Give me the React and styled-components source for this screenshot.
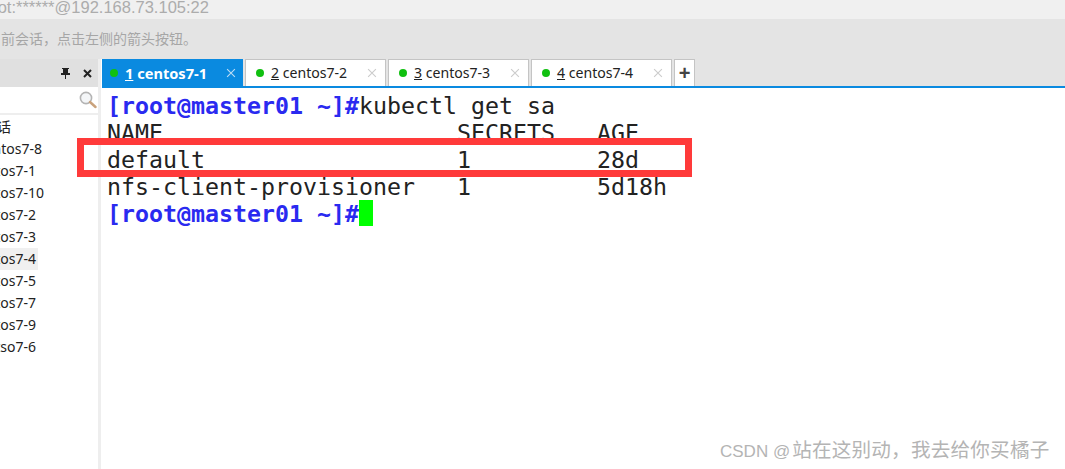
import React from "react"
import styled, { createGlobalStyle } from "styled-components"

const GlobalStyle = createGlobalStyle`
  html, body {
    margin: 0;
    padding: 0;
    background: #ffffff;
  }
  body {
    font-family: "Noto Sans", "Noto Sans CJK SC", sans-serif;
  }
`

const sessions = [
  { name: "centos7-8", shift: "-22px" },
  { name: "centos7-1" },
  { name: "centos7-10" },
  { name: "centos7-2" },
  { name: "centos7-3" },
  { name: "centos7-4", active: true },
  { name: "centos7-5" },
  { name: "centos7-7" },
  { name: "centos7-9" },
  { name: "centso7-6" },
]

const tabs = [
  { no: "1", name: "centos7-1", active: true },
  { no: "2", name: "centos7-2" },
  { no: "3", name: "centos7-3" },
  { no: "4", name: "centos7-4" },
]

const PinIcon = () => (
  <svg width="11" height="12" viewBox="0 0 11 12">
    <path d="M2 1h7v1H8v4h2v2H6v4H5V8H1V6h2V2H2z" fill="#222" />
  </svg>
)

const CloseIcon = ({ color = "#222", size = 9, width = 2 }) => (
  <svg width={size} height={size} viewBox="0 0 9 9">
    <path d="M1 1l7 7M8 1L1 8" stroke={color} strokeWidth={width} fill="none" />
  </svg>
)

const SearchIcon = () => (
  <svg width="18" height="18" viewBox="0 0 18 18">
    <circle cx="7" cy="7" r="5.6" fill="#f4f6f8" stroke="#b4b4b4" strokeWidth="1.6" />
    <path d="M11 11l5.5 5" stroke="#c9a27c" strokeWidth="2.4" strokeLinecap="round" />
  </svg>
)

export default function App() {
  return (
    <Page>
      <GlobalStyle />
      <TitleBar>
        <TitleText>root:******@192.168.73.105:22</TitleText>
      </TitleBar>
      <HintBar>
        <HintText>要恢复当前会话，点击左侧的箭头按钮。</HintText>
      </HintBar>
      <Body>
        <Sidebar>
          <SideHeader>
            <PinIcon />
            <CloseIcon />
          </SideHeader>
          <SearchRow>
            <SearchIcon />
          </SearchRow>
          <SessionList>
            <SessionRow $shift="-3px">话</SessionRow>
            {sessions.map((s) => (
              <SessionRow key={s.name} $active={s.active} $shift={s.shift}>
                {s.name}
              </SessionRow>
            ))}
          </SessionList>
        </Sidebar>
        <Divider />
        <Main>
          <TabBar>
            {tabs.map((t) => (
              <Tab key={t.no} $active={t.active}>
                <Dot />
                <TabLabel $active={t.active}>
                  <u>{t.no}</u> {t.name}
                </TabLabel>
                <TabClose>
                  <CloseIcon color={t.active ? "#bcdcf5" : "#cccccc"} size={10} width={1} />
                </TabClose>
              </Tab>
            ))}
            <AddTab>+</AddTab>
          </TabBar>
          <Terminal>
            <Line $prompt>
              [root@master01 ~]#<Plain>kubectl get sa</Plain>
            </Line>
            <Line>{"NAME                     SECRETS   AGE"}</Line>
            <Line>{"default                  1         28d"}</Line>
            <Line>{"nfs-client-provisioner   1         5d18h"}</Line>
            <Line $prompt>
              [root@master01 ~]#<Cursor />
            </Line>
          </Terminal>
        </Main>
      </Body>
      <Highlight />
      <Watermark>
        <WatermarkLatin>CSDN @</WatermarkLatin>站在这别动，我去给你买橘子
      </Watermark>
    </Page>
  )
}

const Page = styled.div`
  position: relative;
  width: 1065px;
  height: 469px;
  overflow: hidden;
  display: flex;
  flex-direction: column;
  background: #ffffff;
`

const TitleBar = styled.div`
  height: 19px;
  box-sizing: border-box;
  padding-bottom: 5px;
  background: #f0f0f0;
  overflow: hidden;
  display: flex;
  align-items: center;
`

const TitleText = styled.div`
  margin-left: -17px;
  font-family: "Liberation Sans", sans-serif;
  font-size: 16.5px;
  color: #acacac;
  white-space: nowrap;
`

const HintBar = styled.div`
  height: 40px;
  box-sizing: border-box;
  padding-bottom: 2px;
  background: #e4e4e4;
  overflow: hidden;
  display: flex;
  align-items: center;
`

const HintText = styled.div`
  margin-left: -55px;
  font-family: "Noto Sans CJK SC", sans-serif;
  font-size: 14px;
  color: #a6a6a6;
  white-space: nowrap;
`

const Body = styled.div`
  flex: 1;
  display: flex;
  min-height: 0;
`

const Sidebar = styled.div`
  width: 98px;
  display: flex;
  flex-direction: column;
  overflow: hidden;
`

const SideHeader = styled.div`
  height: 28px;
  background: #e0e0e0;
  display: flex;
  align-items: center;
  justify-content: flex-end;
  gap: 12px;
  padding-right: 6px;
`

const SearchRow = styled.div`
  height: 26px;
  border-bottom: 2px solid #eeeeee;
  display: flex;
  align-items: center;
  justify-content: flex-end;
  padding-right: 1px;
`

const SessionList = styled.div`
  display: flex;
  flex-direction: column;
  padding-top: 1px;
`

const SessionRow = styled.div`
  height: 22px;
  width: 66px;
  margin-left: ${(p) => p.$shift || "-28px"};
  font-size: 14px;
  line-height: 22px;
  color: #222222;
  white-space: nowrap;
  background: ${(p) => (p.$active ? "#f0f0f0" : "transparent")};
`

const Divider = styled.div`
  width: 3px;
  margin-right: 1px;
  background: #eeeeee;
`

const Main = styled.div`
  flex: 1;
  display: flex;
  flex-direction: column;
`

const TabBar = styled.div`
  height: 27px;
  display: flex;
  gap: 2px;
  background: #e4e4e4;
  border-bottom: 2px solid #0a8ae0;
`

const Tab = styled.div`
  width: 141px;
  box-sizing: border-box;
  display: flex;
  align-items: center;
  padding: 0 ${(p) => (p.$active ? "6px" : "8px")} 1px ${(p) => (p.$active ? "7px" : "10px")};
  color: ${(p) => (p.$active ? "#ffffff" : "#222222")};
  font-weight: ${(p) => (p.$active ? 700 : 400)};
  background: ${(p) => (p.$active ? "#0a8ae0" : "#ffffff")};
  border: 1px solid ${(p) => (p.$active ? "#0a8ae0" : "#c4c4c4")};
  border-bottom: none;
`

const Dot = styled.span`
  width: 8px;
  height: 8px;
  border-radius: 50%;
  background: #10c010;
  margin-right: 7px;
`

const TabLabel = styled.span`
  flex: 1;
  font-size: ${(p) => (p.$active ? "14.6px" : "14.1px")};
  white-space: pre;
`

const TabClose = styled.span`
  display: flex;
`

const AddTab = styled.div`
  width: 21px;
  box-sizing: border-box;
  display: flex;
  align-items: center;
  justify-content: center;
  background: #ffffff;
  border: 1px solid #c4c4c4;
  border-bottom: none;
  font-family: "Liberation Sans", sans-serif;
  font-size: 20px;
  font-weight: 700;
  color: #444444;
`

const Terminal = styled.div`
  padding: 4px 0 0 5px;
  font-family: "DejaVu Sans Mono", monospace;
  font-size: 23.25px;
  line-height: 27px;
`

const Line = styled.div`
  height: 27px;
  white-space: pre;
  color: ${(p) => (p.$prompt ? "#2a2af0" : "#222222")};
  font-weight: ${(p) => (p.$prompt ? 700 : 400)};
`

const Plain = styled.span`
  color: #222222;
  font-weight: 400;
`

const Cursor = styled.span`
  display: inline-block;
  width: 14px;
  height: 26px;
  vertical-align: top;
  background: #00ff00;
`

const Highlight = styled.div`
  position: absolute;
  left: 77px;
  top: 138px;
  width: 601px;
  height: 25px;
  border: 7px solid #ff3a3a;
`

const Watermark = styled.div`
  position: absolute;
  left: 720px;
  top: 437px;
  font-family: "Noto Sans CJK SC", sans-serif;
  font-size: 19.6px;
  letter-spacing: 0.2px;
  line-height: 24px;
  color: #b4b4b4;
  white-space: nowrap;
`

const WatermarkLatin = styled.span`
  font-family: "Liberation Sans", sans-serif;
  font-size: 17px;
  letter-spacing: 0;
  margin-right: 2px;
`
